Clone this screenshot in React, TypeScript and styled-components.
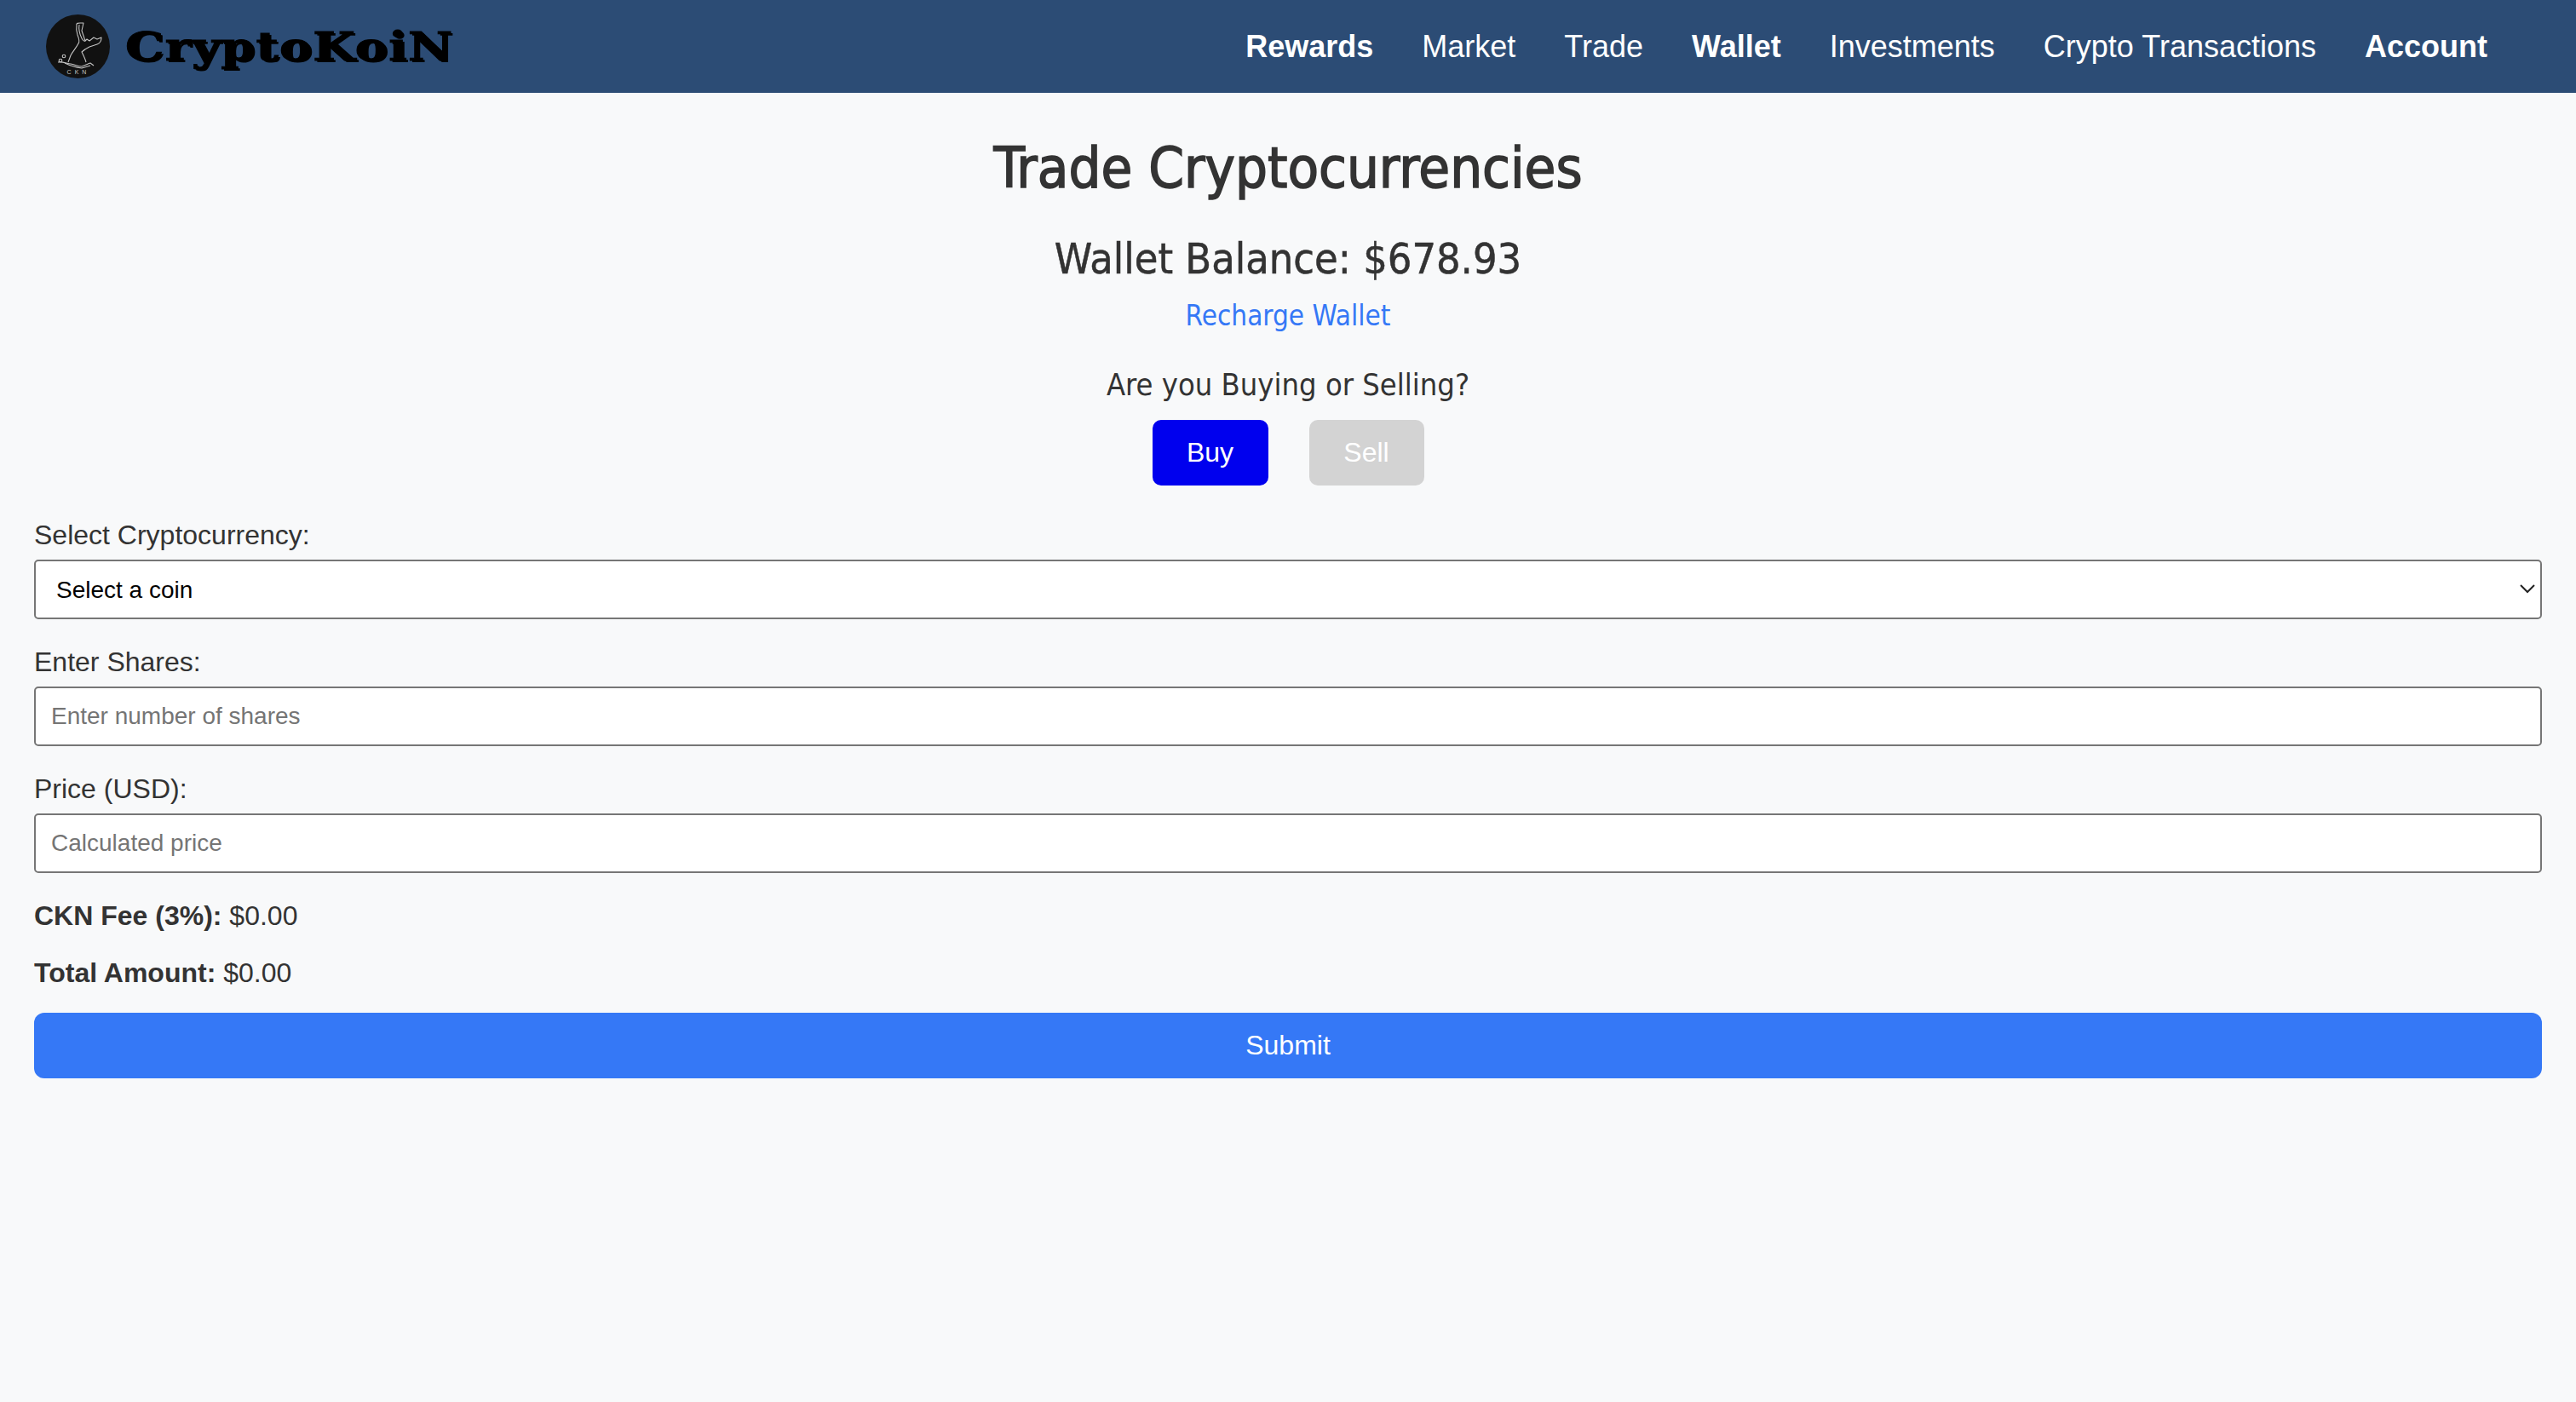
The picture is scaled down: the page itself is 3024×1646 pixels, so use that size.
import React from 'react';
import styled, { createGlobalStyle } from 'styled-components';

const GlobalStyle = createGlobalStyle`
    html, body {
        margin: 0;
        padding: 0;
        background-color: #f8f9fa;
        font-family: "Liberation Sans", Arial, sans-serif;
        color: #333;
    }
    * {
        box-sizing: border-box;
    }
`;

const Page = styled.div`
    min-height: 1646px;
    background-color: #f8f9fa;
`;

const Navbar = styled.header`
    display: flex;
    justify-content: space-between;
    align-items: center;
    height: 109px;
    padding: 0 104px 0 54px;
    background-color: #2c4c75;
`;

const Brand = styled.div`
    display: flex;
    align-items: center;
    gap: 18px;
`;

const BrandName = styled.span`
    font-family: "DejaVu Serif", serif;
    font-weight: bold;
    font-size: 46px;
    line-height: 1;
    color: #000;
    letter-spacing: 1px;
    text-shadow: 2px 2px 0 #000;
    -webkit-text-stroke: 1px #000;
    transform: scaleX(1.24);
    transform-origin: left center;
`;

const NavLinks = styled.nav`
    display: flex;
    gap: 57px;
`;

const NavLink = styled.a<{ $bold?: boolean }>`
    font-size: 36px;
    color: #fff;
    font-weight: ${(props) => (props.$bold ? 'bold' : 'normal')};
    text-decoration: none;
`;

const Main = styled.main`
    display: flex;
    flex-direction: column;
    padding: 0 40px;
`;

const Heading = styled.div`
    display: flex;
    flex-direction: column;
    align-items: center;
    font-family: "DejaVu Sans", sans-serif;
    font-stretch: condensed;
`;

const Title = styled.h1`
    margin: 50px 0 0;
    font-size: 66.5px;
    line-height: 76px;
    font-weight: normal;
    -webkit-text-stroke: 1.5px #333;
`;

const Balance = styled.h2`
    margin: 41px 0 0;
    font-size: 50px;
    line-height: 56px;
    font-weight: normal;
    -webkit-text-stroke: 0.5px #333;
`;

const Recharge = styled.a`
    margin-top: 19px;
    font-size: 33px;
    line-height: 40px;
    color: #3578f6;
    text-decoration: none;
`;

const Question = styled.p`
    margin: 41px 0 0;
    font-size: 36px;
    line-height: 40px;
`;

const ModeButtons = styled.div`
    display: flex;
    gap: 48px;
    margin-top: 21px;
`;

const ModeButton = styled.button<{ $active?: boolean }>`
    width: ${(props) => (props.$active ? '136px' : '135px')};
    height: 77px;
    border: none;
    border-radius: 10px;
    font-family: "Liberation Sans", Arial, sans-serif;
    font-size: 32px;
    color: #fff;
    background-color: ${(props) => (props.$active ? '#0000ee' : '#d3d3d3')};
`;

const Form = styled.form`
    display: flex;
    flex-direction: column;
    margin-top: 40px;
`;

const Label = styled.label`
    display: block;
    margin-bottom: 10px;
    font-size: 32px;
    line-height: 37px;
`;

const Field = styled.div`
    margin-bottom: 32px;
`;

const SelectWrap = styled.div`
    position: relative;
`;

const Select = styled.select`
    display: block;
    width: 100%;
    height: 70px;
    padding: 0 24px;
    border: 2px solid #767676;
    border-radius: 5px;
    font-family: inherit;
    font-size: 28px;
    color: #000;
    background-color: #fff;
    appearance: none;
`;

const Chevron = styled.svg`
    position: absolute;
    top: 28px;
    right: 8px;
    width: 18px;
    height: 12px;
    pointer-events: none;
`;

const Input = styled.input`
    display: block;
    width: 100%;
    height: 70px;
    padding: 0 18px;
    border: 2px solid #767676;
    border-radius: 5px;
    font-family: inherit;
    font-size: 28px;
    background-color: #fff;
    &::placeholder {
        color: #757575;
    }
`;

const Summary = styled.p`
    margin: 0 0 30px;
    font-size: 32px;
    line-height: 37px;
`;

const Submit = styled.button`
    width: 100%;
    height: 77px;
    margin-top: -2px;
    border: none;
    border-radius: 12px;
    font-family: inherit;
    font-size: 32px;
    color: #fff;
    background-color: #3578f6;
`;

const Logo = () => (
    <svg width="75" height="75" viewBox="0 0 75 75">
        <circle cx="37.5" cy="37.5" r="37.5" fill="#111" />
        <g fill="none" stroke="#c4c4c4" strokeWidth="1.1" strokeLinejoin="round">
            <path d="M36 13 C35 10 38 10 40 10 L44 10 L42 19 L46 31 L48 29 L51 31 L56 27 L60 29 L65 27 C65 31 63 34 60 35 L51 38 C47 40 44 42 42 44 C44 48 46 52 47 56" />
            <path d="M36 13 C35 18 36 21 37 24 C39 29 39 33 38 34 C35 40 31 44 29 48 L26 56" />
            <path d="M39 12 C38 18 40 24 42 28 C43 30 45 32 46 31" />
            <path d="M14 56 C20 55 25 58 29 58 C34 59 38 61 42 61 C46 60 49 58 52 57 L56 60" />
            <path d="M22 57 C28 60 34 62 42 63 L52 60" />
            <circle cx="21" cy="49" r="1.8" />
            <circle cx="17" cy="54" r="1.8" />
        </g>
        <text x="38" y="70" textAnchor="middle" fontFamily="Liberation Sans" fontSize="7" letterSpacing="4" fill="#c4c4c4">CKN</text>
    </svg>
);

const links = [
    { label: 'Rewards', bold: true },
    { label: 'Market' },
    { label: 'Trade' },
    { label: 'Wallet', bold: true },
    { label: 'Investments' },
    { label: 'Crypto Transactions' },
    { label: 'Account', bold: true },
];

const App = () => {
    return (
        <Page>
            <GlobalStyle />
            <Navbar>
                <Brand>
                    <Logo />
                    <BrandName>CryptoKoiN</BrandName>
                </Brand>
                <NavLinks>
                    {links.map((link) => (
                        <NavLink key={link.label} href="#" $bold={link.bold}>{link.label}</NavLink>
                    ))}
                </NavLinks>
            </Navbar>
            <Main>
                <Heading>
                    <Title>Trade Cryptocurrencies</Title>
                    <Balance>Wallet Balance: $678.93</Balance>
                    <Recharge href="#">Recharge Wallet</Recharge>
                    <Question>Are you Buying or Selling?</Question>
                    <ModeButtons>
                        <ModeButton type="button" $active>Buy</ModeButton>
                        <ModeButton type="button">Sell</ModeButton>
                    </ModeButtons>
                </Heading>
                <Form onSubmit={(e) => e.preventDefault()}>
                    <Field>
                        <Label>Select Cryptocurrency:</Label>
                        <SelectWrap>
                            <Select defaultValue="">
                                <option value="">Select a coin</option>
                            </Select>
                            <Chevron viewBox="0 0 18 12">
                                <path d="M1 2 L9 10 L17 2" fill="none" stroke="#222" strokeWidth="2" />
                            </Chevron>
                        </SelectWrap>
                    </Field>
                    <Field>
                        <Label>Enter Shares:</Label>
                        <Input type="text" placeholder="Enter number of shares" />
                    </Field>
                    <Field>
                        <Label>Price (USD):</Label>
                        <Input type="text" placeholder="Calculated price" readOnly />
                    </Field>
                    <Summary><strong>CKN Fee (3%):</strong> $0.00</Summary>
                    <Summary><strong>Total Amount:</strong> $0.00</Summary>
                    <Submit type="submit">Submit</Submit>
                </Form>
            </Main>
        </Page>
    );
};

export default App;
